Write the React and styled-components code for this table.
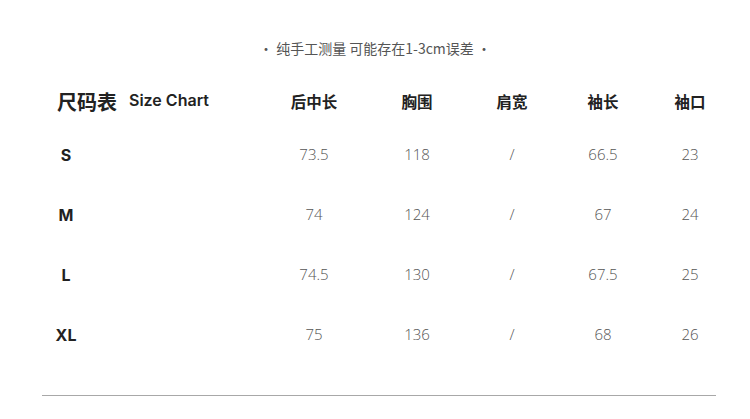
import React from "react";
import styled, { createGlobalStyle } from "styled-components";

const Global = createGlobalStyle`
  html, body { margin: 0; padding: 0; background: #fff; }
  body { font-family: "Noto Sans CJK SC", "Noto Sans", sans-serif; }
`;

const Page = styled.div`
  width: 750px;
  height: 419px;
  background: #fff;
  display: flex;
  flex-direction: column;
  overflow: hidden;
`;

const Note = styled.div`
  padding-top: 38px;
  padding-bottom: 19px;
  height: 20px;
  line-height: 20px;
  text-align: center;
  font-size: 14px;
  color: #555;
  font-family: "Noto Sans CJK SC", sans-serif;
`;

const Table = styled.div`
  display: grid;
  grid-template-columns: 262px 104px 102px 88px 94px 80px;
`;

const Row = styled.div`
  display: contents;
`;

const Cell = styled.div`
  height: ${(p) => p.$h}px;
  padding-bottom: 3px;
  box-sizing: border-box;
  display: flex;
  align-items: center;
  justify-content: center;
  font-family: "Open Sans", "Noto Sans CJK SC", sans-serif;
  font-size: 15px;
  font-weight: 300;
  color: #555;
`;

const HeadCell = styled.div`
  height: ${(p) => p.$h}px;
  display: flex;
  align-items: center;
  justify-content: center;
  font-family: "Noto Sans CJK SC", sans-serif;
  font-size: 15.5px;
  font-weight: 700;
  color: #222;
`;

const TitleCell = styled.div`
  height: ${(p) => p.$h}px;
  display: flex;
  align-items: center;
  padding-left: 57px;
  gap: 12px;
`;

const TitleCn = styled.span`
  font-family: "Noto Sans CJK SC", sans-serif;
  font-size: 20px;
  font-weight: 700;
  color: #222;
`;

const TitleEn = styled.span`
  font-family: Inter, "Noto Sans", sans-serif;
  font-size: 16px;
  font-weight: 600;
  color: #222;
  margin-top: -2px;
`;

const SizeCell = styled.div`
  height: ${(p) => p.$h}px;
  display: flex;
  align-items: center;
  padding-left: 41px;
`;

const SizeLabel = styled.span`
  width: 50px;
  text-align: center;
  font-family: Inter, "Noto Sans", sans-serif;
  font-size: 16px;
  font-weight: 700;
  color: #222;
`;

const Divider = styled.div`
  margin: 30px 34px 0 42px;
  height: 1px;
  background: #a8a8a8;
`;

const headers = ["后中长", "胸围", "肩宽", "袖长", "袖口"];
const rows = [
  ["S", "73.5", "118", "/", "66.5", "23"],
  ["M", "74", "124", "/", "67", "24"],
  ["L", "74.5", "130", "/", "67.5", "25"],
  ["XL", "75", "136", "/", "68", "26"],
];

export default function App() {
  return (
    <>
      <Global />
      <Page>
        <Note>· 纯手工测量 可能存在1-3cm误差 ·</Note>
        <Table>
          <Row>
            <TitleCell $h={48}>
              <TitleCn>尺码表</TitleCn>
              <TitleEn>Size Chart</TitleEn>
            </TitleCell>
            {headers.map((h) => (
              <HeadCell key={h} $h={48}>{h}</HeadCell>
            ))}
          </Row>
          {rows.map(([size, ...vals]) => (
            <Row key={size}>
              <SizeCell $h={60}>
                <SizeLabel>{size}</SizeLabel>
              </SizeCell>
              {vals.map((v, i) => (
                <Cell key={i} $h={60}>{v}</Cell>
              ))}
            </Row>
          ))}
        </Table>
        <Divider />
      </Page>
    </>
  );
}
